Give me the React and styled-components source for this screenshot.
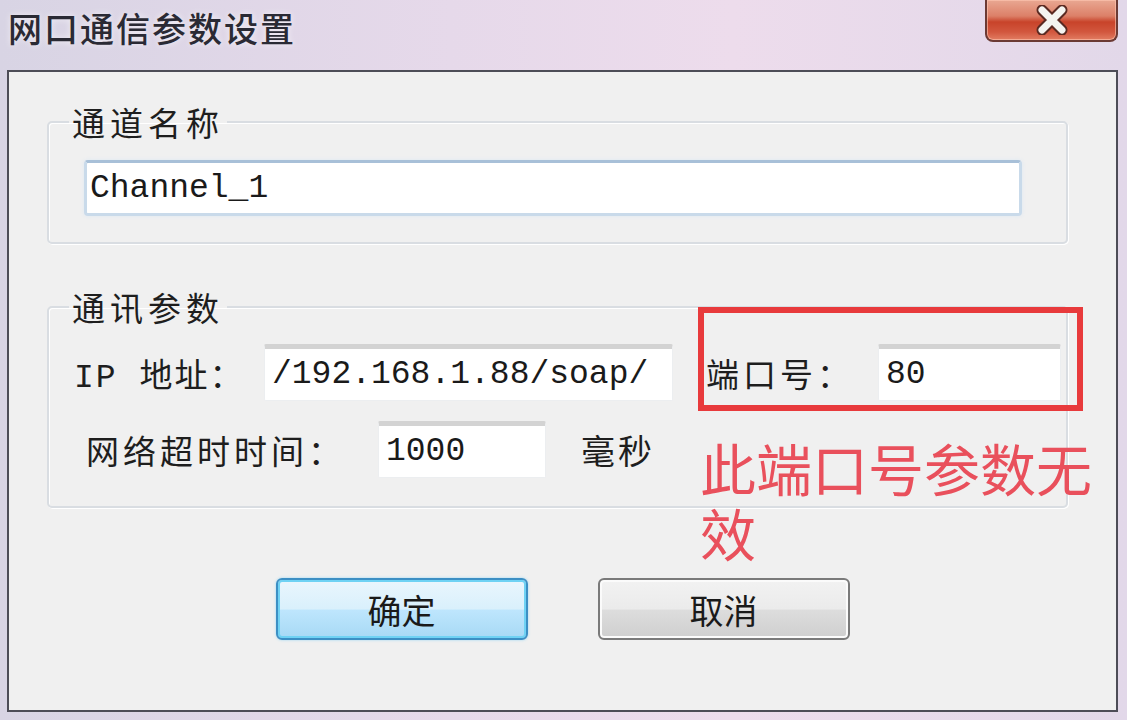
import React from 'react'
import styled, { createGlobalStyle } from 'styled-components'

const GlobalStyle = createGlobalStyle`
  html, body {
    margin: 0;
    padding: 0;
    width: 1127px;
    height: 720px;
    overflow: hidden;
  }
  body {
    font-family: "Liberation Mono", "Noto Sans CJK SC", monospace;
  }
`

const CloseIcon = () => (
  <svg width="44" height="30" viewBox="0 0 44 30">
    <path d="M12 5 L32 25 M32 5 L12 25" stroke="#5a2a22" strokeWidth="11" strokeLinecap="round" />
    <path d="M12 5 L32 25 M32 5 L12 25" stroke="#f4f4f0" strokeWidth="7" strokeLinecap="round" />
  </svg>
)

export default function App () {
  return (
    <Window>
      <GlobalStyle />
      <TitleBar>
        <Title>网口通信参数设置</Title>
        <CloseButton><CloseIcon /></CloseButton>
      </TitleBar>
      <Client>
        <Group $pt={19} $pb={26}>
          <Legend>通道名称</Legend>
          <TextBox $w={938} $focus value='Channel_1' readOnly />
        </Group>
        <Group $mt={44} $pt={18} $pb={28}>
          <Legend>通讯参数</Legend>
          <Row>
            <Label $w={190} $ls={2}>IP 地址：</Label>
            <TextBox $w={409} value='/192.168.1.88/soap/' readOnly />
            <PortCell>
              <Label $w={172}>端口号：</Label>
              <TextBox $w={183} value='80' readOnly />
            </PortCell>
          </Row>
          <Row $mt={20} $indent={12}>
            <Label $w={292}>网络超时时间：</Label>
            <TextBox $w={168} value='1000' readOnly />
            <Unit>毫秒</Unit>
          </Row>
        </Group>
        <Note>此端口号参数无效</Note>
        <Buttons>
          <Button $primary>确定</Button>
          <Button>取消</Button>
        </Buttons>
      </Client>
    </Window>
  )
}

const Window = styled.div`
  width: 1127px;
  height: 720px;
  box-sizing: border-box;
  display: flex;
  flex-direction: column;
  padding: 0 9px 8px 7px;
  background: linear-gradient(to right, #d8d4e4 0%, #e6d9ea 40%, #eddcec 65%, #e2d8e9 100%);
`
const TitleBar = styled.div`
  height: 70px;
  display: flex;
  justify-content: space-between;
  align-items: flex-start;
`
const Title = styled.div`
  font-family: "Noto Sans CJK SC", sans-serif;
  font-size: 34px;
  font-weight: 500;
  letter-spacing: 2px;
  line-height: 40px;
  margin-top: 8px;
  margin-left: 1px;
  color: #2a2a34;
  text-shadow: 0 0 6px rgba(255, 255, 255, 0.7);
`
const CloseButton = styled.div`
  width: 133px;
  height: 42px;
  box-sizing: border-box;
  display: flex;
  align-items: center;
  justify-content: center;
  border: 2px solid #6b3a34;
  border-top: 0;
  border-radius: 0 0 8px 8px;
  background: linear-gradient(to bottom, #e9a892 0%, #dc8068 40%, #c8432a 55%, #d2573e 80%, #e27d62 100%);
  box-shadow: inset 0 0 0 1px rgba(255, 200, 180, 0.6);
`
const Client = styled.div`
  position: relative;
  flex: 1;
  box-sizing: border-box;
  border: 2px solid #4d4d57;
  background: #f0f0f0;
  padding: 31px 48px 0 38px;
  display: flex;
  flex-direction: column;
`
const Group = styled.fieldset`
  margin: ${p => p.$mt || 0}px 0 0 0;
  padding: ${p => p.$pt}px 0 ${p => p.$pb}px 0;
  border: 2px solid #d9dde2;
  border-radius: 5px;
  box-shadow: inset 1px 1px 0 #ffffff, 1px 1px 0 #ffffff;
  min-width: 0;
`
const Legend = styled.legend`
  font-family: "Noto Sans CJK SC", sans-serif;
  font-size: 33px;
  line-height: 38px;
  letter-spacing: 5px;
  color: #1e1e1e;
  margin-left: 20px;
  padding: 0 3px;
`
const TextBox = styled.input`
  display: block;
  width: ${p => p.$w}px;
  height: ${p => p.$focus ? 56 : 57}px;
  box-sizing: border-box;
  margin-left: ${p => p.$focus ? 35 : 0}px;
  padding: 0 0 0 ${p => p.$focus ? 3 : 7}px;
  font-family: "Liberation Mono", monospace;
  font-size: 33px;
  color: #1a1a1a;
  background: #ffffff;
  outline: none;
  border-radius: ${p => p.$focus ? 4 : 2}px;
  border: ${p => p.$focus ? '3px solid #c9daea' : '1px solid #eceef0'};
  border-top: ${p => p.$focus ? '3px solid #a8c0d8' : '5px solid #d3d3d3'};
  box-shadow: ${p => p.$focus ? '0 0 4px #dde8f3' : 'none'};
`
const Row = styled.div`
  display: flex;
  align-items: center;
  padding-left: ${p => 25 + (p.$indent || 0)}px;
  margin-top: ${p => p.$mt || 0}px;
`
const Label = styled.div`
  width: ${p => p.$w}px;
  flex-shrink: 0;
  font-family: "Liberation Mono", "Noto Sans CJK SC", monospace;
  font-size: 33px;
  letter-spacing: ${p => p.$ls ?? 4}px;
  color: #1e1e1e;
  white-space: nowrap;
`
const PortCell = styled.div`
  position: relative;
  display: flex;
  align-items: center;
  margin-left: 33px;
  &::after {
    content: '';
    position: absolute;
    left: -8px;
    right: -22px;
    top: -37px;
    bottom: -10px;
    border: 6px solid #e83a3c;
    pointer-events: none;
  }
`
const Unit = styled.div`
  margin-left: 35px;
  font-family: "Noto Sans CJK SC", sans-serif;
  font-size: 34px;
  letter-spacing: 3px;
  color: #1e1e1e;
`
const Note = styled.div`
  position: absolute;
  left: 691px;
  top: 362px;
  width: 400px;
  font-family: "Noto Sans CJK SC", sans-serif;
  font-size: 56px;
  line-height: 65px;
  color: #e9505c;
`
const Buttons = styled.div`
  display: flex;
  justify-content: center;
  gap: 70px;
  margin-top: 70px;
  margin-left: -38px;
  margin-right: -48px;
`
const Button = styled.div`
  width: 252px;
  height: 62px;
  box-sizing: border-box;
  display: flex;
  align-items: center;
  justify-content: center;
  font-family: "Noto Sans CJK SC", sans-serif;
  font-size: 34px;
  color: #1a1a1a;
  border-radius: 6px;
  border: 2px solid ${p => p.$primary ? '#3c8fc4' : '#7a7a7a'};
  background: ${p => p.$primary
    ? 'linear-gradient(to bottom, #eaf6fd 0%, #d9f0fc 50%, #bee6fd 52%, #a7d9f5 100%)'
    : 'linear-gradient(to bottom, #f2f2f2 0%, #ebebeb 50%, #dddddd 52%, #cfcfcf 100%)'};
  box-shadow: ${p => p.$primary
    ? 'inset 0 0 0 2px #6fd2f4, 0 0 3px #9fd8f2'
    : 'inset 0 0 0 2px #fbfbfb'};
`
